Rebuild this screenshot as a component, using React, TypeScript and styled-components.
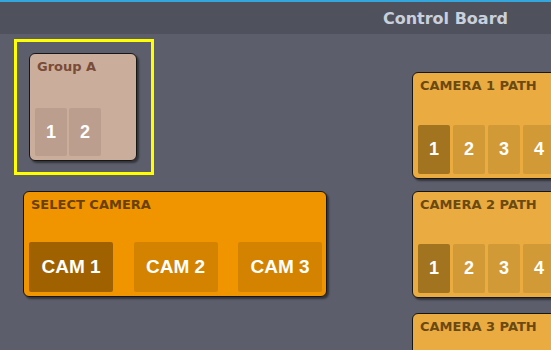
import styled, { createGlobalStyle } from "styled-components";

const GlobalStyle = createGlobalStyle`
  html, body {
    margin: 0;
    padding: 0;
    background: #5c5e6b;
    overflow: hidden;
  }
`;

interface Palette {
  bg: string;
  title: string;
  button: string;
  active: string;
}

const group: Palette = {
  bg: "#cbad9c",
  title: "#7a4b36",
  button: "#bc9e8f",
  active: "#bc9e8f"
};

const select: Palette = {
  bg: "#f09400",
  title: "#6a4000",
  button: "#d48300",
  active: "#a06200"
};

const path: Palette = {
  bg: "#eaab41",
  title: "#6b4911",
  button: "#d29937",
  active: "#a27420"
};

// widget positions on the board canvas
const paths = [
  { id: "cam1", title: "CAMERA 1 PATH", x: 412, y: 38 },
  { id: "cam2", title: "CAMERA 2 PATH", x: 412, y: 157 },
  { id: "cam3", title: "CAMERA 3 PATH", x: 412, y: 279 }
];

const App = () => {
  return (
    <Page>
      <GlobalStyle />
      <Header>
        <HeaderTitle>Control Board</HeaderTitle>
      </Header>
      <Board>
        <Widget $x={14} $y={5}>
          <Selection>
            <Card $palette={group} $width={108} $height={108}>
              <CardTitle $color={group.title}>Group A</CardTitle>
              <ButtonRow $gap={2}>
                {["1", "2"].map((n) => (
                  <Pad key={n} $bg={group.button} $w={32} $h={48} $size={18}>
                    {n}
                  </Pad>
                ))}
              </ButtonRow>
            </Card>
          </Selection>
        </Widget>

        <Widget $x={23} $y={157}>
          <Card $palette={select} $width={304} $height={106}>
            <CardTitle $color={select.title}>SELECT CAMERA</CardTitle>
            <ButtonRow $spread>
              {["CAM 1", "CAM 2", "CAM 3"].map((c, i) => (
                <Pad
                  key={c}
                  $bg={i === 0 ? select.active : select.button}
                  $w={84}
                  $h={50}
                  $size={19}
                >
                  {c}
                </Pad>
              ))}
            </ButtonRow>
          </Card>
        </Widget>

        {paths.map((w) => (
          <Widget key={w.id} $x={w.x} $y={w.y}>
            <Card $palette={path} $width={160} $height={107}>
              <CardTitle $color={path.title}>{w.title}</CardTitle>
              <ButtonRow $gap={3}>
                {["1", "2", "3", "4"].map((n, i) => (
                  <Pad
                    key={n}
                    $bg={i === 0 ? path.active : path.button}
                    $w={32}
                    $h={49}
                    $size={18}
                  >
                    {n}
                  </Pad>
                ))}
              </ButtonRow>
            </Card>
          </Widget>
        ))}
      </Board>
    </Page>
  );
};

const Page = styled.div`
  width: 551px;
  height: 350px;
  display: flex;
  flex-direction: column;
  background: #5c5e6b;
  overflow: hidden;
`;

const Header = styled.div`
  flex: none;
  height: 32px;
  border-top: 2px solid #33a6de;
  background: #4f515d;
  display: flex;
  align-items: center;
  justify-content: flex-end;
  padding-right: 43px;
`;

const HeaderTitle = styled.div`
  font-family: "DejaVu Sans", Verdana, sans-serif;
  font-weight: bold;
  font-size: 16px;
  color: #c9d0dc;
`;

const Board = styled.div`
  position: relative;
  flex: 1;
  overflow: hidden;
`;

const Widget = styled.div<{ $x: number; $y: number }>`
  position: absolute;
  left: ${({ $x }) => $x}px;
  top: ${({ $y }) => $y}px;
`;

const Selection = styled.div`
  box-sizing: border-box;
  width: 140px;
  height: 136px;
  border: 3px solid #ffff00;
  padding: 11px 0 0 12px;
`;

const Card = styled.div<{ $palette: Palette; $width: number; $height: number }>`
  box-sizing: border-box;
  width: ${({ $width }) => $width}px;
  height: ${({ $height }) => $height}px;
  background: ${({ $palette }) => $palette.bg};
  border: 1px solid #161616;
  border-radius: 6px;
  box-shadow: 2px 2px 2px rgba(0, 0, 0, 0.45);
  padding: 5px 4px 4px 5px;
  display: flex;
  flex-direction: column;
  justify-content: space-between;
`;

const CardTitle = styled.div<{ $color: string }>`
  font-family: "DejaVu Sans", Verdana, sans-serif;
  font-weight: bold;
  font-size: 13px;
  color: ${({ $color }) => $color};
  padding-left: 2px;
  white-space: nowrap;
`;

const ButtonRow = styled.div<{ $gap?: number; $spread?: boolean }>`
  display: flex;
  gap: ${({ $gap }) => $gap ?? 0}px;
  justify-content: ${({ $spread }) => ($spread ? "space-between" : "flex-start")};
`;

const Pad = styled.div<{ $bg: string; $w: number; $h: number; $size: number }>`
  flex: none;
  width: ${({ $w }) => $w}px;
  height: ${({ $h }) => $h}px;
  background: ${({ $bg }) => $bg};
  border-radius: 2px;
  display: flex;
  align-items: center;
  justify-content: center;
  font-family: "Liberation Sans", Arial, sans-serif;
  font-weight: bold;
  font-size: ${({ $size }) => $size}px;
  color: #ffffff;
`;

export default App;
